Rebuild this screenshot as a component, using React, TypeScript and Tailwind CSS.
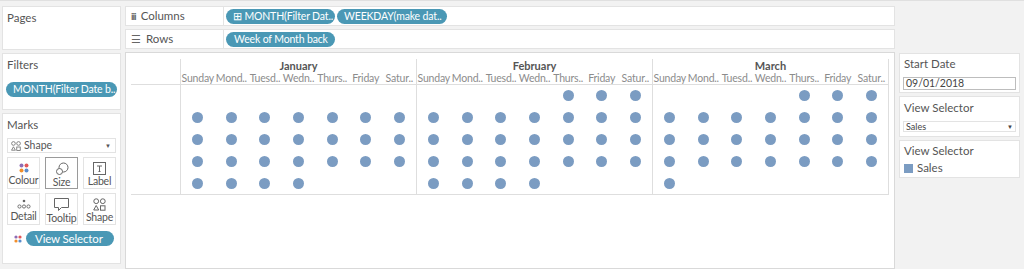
import React from "react";

const F = { fontFamily: "Lato, 'Noto Sans', 'Liberation Sans', sans-serif" };

const full = [1, 1, 1, 1, 1, 1, 1];
const months = [
  { name: "January", rows: [[0, 0, 0, 0, 0, 0, 0], full, full, full, [1, 1, 1, 1, 0, 0, 0]] },
  { name: "February", rows: [[0, 0, 0, 0, 1, 1, 1], full, full, full, [1, 1, 1, 1, 0, 0, 0]] },
  { name: "March", rows: [[0, 0, 0, 0, 1, 1, 1], full, full, full, [1, 0, 0, 0, 0, 0, 0]] },
];
const days = ["Sunday", "Mond..", "Tuesd..", "Wedn..", "Thurs..", "Friday", "Satur.."];

function Pill({ children, className = "" }: { children: React.ReactNode; className?: string }) {
  return (
    <div
      className={`h-[15px] rounded-full bg-[#4a98b5] text-white text-[10.5px] leading-[15px] px-[7px] whitespace-nowrap overflow-hidden tracking-[-0.15px] ${className}`}
    >
      {children}
    </div>
  );
}

function Card({ title, className = "", children }: { title: string; className?: string; children?: React.ReactNode }) {
  return (
    <div className={`bg-white border border-[#e3e3e3] ${className}`}>
      <div className="text-[11.5px] text-[#555] px-[4px] pt-[4px] leading-[14px]">{title}</div>
      {children}
    </div>
  );
}

function ColourIcon() {
  return (
    <svg width="10" height="10" viewBox="0 0 10 10">
      <circle cx="2.5" cy="2.5" r="2" fill="#8f6db5" />
      <circle cx="7.5" cy="2.5" r="2" fill="#e15759" />
      <circle cx="2.5" cy="7.5" r="2" fill="#f28e2b" />
      <circle cx="7.5" cy="7.5" r="2" fill="#5b8ccc" />
    </svg>
  );
}

function SizeIcon() {
  return (
    <svg width="14" height="14" viewBox="0 0 14 14" fill="none" stroke="#666" strokeWidth="1">
      <circle cx="8.5" cy="5.5" r="4.5" />
      <circle cx="4.5" cy="9.5" r="3" fill="white" />
    </svg>
  );
}

function LabelIcon() {
  return (
    <svg width="13" height="13" viewBox="0 0 13 13" fill="none" stroke="#666" strokeWidth="1">
      <rect x="0.5" y="0.5" width="12" height="12" />
      <path d="M4 4h5M6.5 4v5.5M5.5 9.5h2" />
    </svg>
  );
}

function DetailIcon() {
  return (
    <svg width="14" height="10" viewBox="0 0 14 10" fill="none" stroke="#666" strokeWidth="0.9">
      <circle cx="7" cy="2" r="1.3" fill="#666" stroke="none" />
      <circle cx="2.5" cy="7.5" r="1.6" />
      <circle cx="7" cy="7.5" r="1.6" />
      <circle cx="11.5" cy="7.5" r="1.6" />
    </svg>
  );
}

function TooltipIcon() {
  return (
    <svg width="15" height="14" viewBox="0 0 15 14" fill="none" stroke="#666" strokeWidth="1">
      <path d="M0.5 0.5h14v9h-7l-3 3v-3h-4z" />
    </svg>
  );
}

function ShapeIcon({ size = 13 }: { size?: number }) {
  return (
    <svg width={size} height={size} viewBox="0 0 13 13" fill="none" stroke="#666" strokeWidth="1">
      <circle cx="3.2" cy="3.2" r="2.4" />
      <circle cx="9.8" cy="3.2" r="2.4" />
      <path d="M3.2 7.5l2.5 4.5h-5z" />
      <rect x="7.5" y="7.8" width="4.5" height="4.4" />
    </svg>
  );
}

function MarkBtn({ label, icon, selected = false }: { label: string; icon: React.ReactNode; selected?: boolean }) {
  return (
    <div
      className={`h-[32px] flex flex-col items-center justify-between pt-[4px] pb-[2px] bg-white border ${
        selected ? "border-[#9a9a9a]" : "border-[#e3e3e3]"
      }`}
    >
      <div className="h-[14px] flex items-center">{icon}</div>
      <div className="text-[10.5px] text-[#555] leading-[12px] tracking-[-0.2px] whitespace-nowrap">{label}</div>
    </div>
  );
}

export default function App() {
  return (
    <div style={F} className="w-[1024px] h-[269px] bg-[#f2f2f2] flex overflow-hidden border-t border-[#e0e0e0]">
      {/* Left column */}
      <div className="w-[119px] ml-[2px] pt-[5px] flex flex-col gap-[3px] shrink-0">
        <Card title="Pages" className="h-[44px]" />
        <Card title="Filters" className="h-[57px]">
          <div className="px-[3px] pt-[10px]">
            <Pill className="px-[6px]">MONTH(Filter Date b..</Pill>
          </div>
        </Card>
        <Card title="Marks" className="h-[151px]">
          <div className="px-[4px] pt-[6px]">
            <div className="h-[15px] border border-[#e3e3e3] flex items-center justify-between px-[3px] text-[10.5px] text-[#555]">
              <div className="flex items-center gap-[3px]">
                <ShapeIcon size={10} />
                <span className="leading-[13px]">Shape</span>
              </div>
              <span className="text-[6px] text-[#555] pr-[1px]">▼</span>
            </div>
            <div className="grid grid-cols-3 gap-x-[5px] gap-y-[4px] mt-[4px]">
              <MarkBtn label="Colour" icon={<ColourIcon />} />
              <MarkBtn label="Size" icon={<SizeIcon />} selected />
              <MarkBtn label="Label" icon={<LabelIcon />} />
              <MarkBtn label="Detail" icon={<DetailIcon />} />
              <MarkBtn label="Tooltip" icon={<TooltipIcon />} />
              <MarkBtn label="Shape" icon={<ShapeIcon />} />
            </div>
            <div className="flex items-center mt-[6px] gap-[4px] pl-[7px]">
              <svg width="8" height="8" viewBox="0 0 8 8">
                <circle cx="2" cy="2" r="1.6" fill="#8f6db5" />
                <circle cx="6" cy="2" r="1.6" fill="#e15759" />
                <circle cx="2" cy="6" r="1.6" fill="#f28e2b" />
                <circle cx="6" cy="6" r="1.6" fill="#5b8ccc" />
              </svg>
              <Pill className="w-[88px] px-[9px] text-[11.5px]">View Selector</Pill>
            </div>
          </div>
        </Card>
      </div>

      {/* Middle column */}
      <div className="w-[770px] ml-[4px] pt-[5px] flex flex-col gap-[3px] shrink-0">
        <div className="h-[20px] flex">
          <div className="w-[99px] bg-white border border-[#e3e3e3] flex items-center gap-[5px] px-[5px] text-[11.5px] text-[#555]">
            <span className="text-[10px] font-bold text-[#666] tracking-[-1px]">iii</span>
            <span>Columns</span>
          </div>
          <div className="flex-1 bg-white border border-l-0 border-[#e3e3e3] flex items-center gap-[2px] pl-[2px]">
            <Pill className="w-[109px] px-[6px]">⊞ MONTH(Filter Dat..</Pill>
            <Pill className="w-[110px] px-[7px]">WEEKDAY(make dat..</Pill>
          </div>
        </div>
        <div className="h-[20px] flex">
          <div className="w-[99px] bg-white border border-[#e3e3e3] flex items-center gap-[5px] px-[5px] text-[11.5px] text-[#555]">
            <span className="text-[11px] text-[#666]">☰</span>
            <span>Rows</span>
          </div>
          <div className="flex-1 bg-white border border-l-0 border-[#e3e3e3] flex items-center pl-[2px]">
            <Pill className="w-[109px] px-[8px]">Week of Month back</Pill>
          </div>
        </div>
        {/* View */}
        <div className="flex-1 bg-white border border-[#d9d9d9] pl-[5px] pt-[6px]">
          <div className="w-[758px] flex flex-col">
            <div className="h-[26px] flex border-b border-[#dedede]">
              <div className="w-[49px]" />
              {months.map((m, i) => (
                <div
                  key={m.name}
                  className={`flex-1 border-l border-[#dedede] flex flex-col ${i === 2 ? "border-r" : ""}`}
                >
                  <div className="h-[13px] text-center text-[11px] font-bold text-[#555] leading-[13px]">{m.name}</div>
                  <div className="flex h-[13px]">
                    {days.map((d) => (
                      <div key={d} className="flex-1 text-center text-[10.5px] text-[#8c8c8c] leading-[13px] whitespace-nowrap tracking-[-0.2px]">
                        {d}
                      </div>
                    ))}
                  </div>
                </div>
              ))}
            </div>
            <div className="h-[110px] flex border-b border-[#dedede]">
              <div className="w-[49px]" />
              {months.map((m, i) => (
                <div key={m.name} className={`flex-1 border-l border-[#dedede] flex flex-col ${i === 2 ? "border-r" : ""}`}>
                  {m.rows.map((r, ri) => (
                    <div key={ri} className="flex-1 flex">
                      {r.map((v, ci) => (
                        <div key={ci} className="flex-1 flex items-center justify-center">
                          {v ? <div className="w-[11px] h-[11px] rounded-full bg-[#7b9cc2]" /> : null}
                        </div>
                      ))}
                    </div>
                  ))}
                </div>
              ))}
            </div>
          </div>
        </div>
      </div>

      {/* Right column */}
      <div className="w-[121px] ml-[4px] pt-[52px] flex flex-col gap-[3px] shrink-0">
        <div className="h-[40px] bg-white border border-[#e3e3e3]">
          <div className="text-[11.5px] text-[#555] px-[4px] pt-[3px] leading-[14px]">Start Date</div>
          <div className="mx-[3px] mt-[6px] h-[13px] border border-[#bdbdbd] text-[10.5px] text-[#444] leading-[11px] px-[2px]">
            09/01/2018
          </div>
        </div>
        <div className="h-[41px] bg-white border border-[#e3e3e3]">
          <div className="text-[11.5px] text-[#555] px-[4px] pt-[4px] leading-[14px]">View Selector</div>
          <div className="mx-[3px] mt-[6px] h-[11px] border border-[#e3e3e3] flex items-center justify-between text-[9px] text-[#444] px-[2px]">
            <span className="leading-[9px]">Sales</span>
            <span className="text-[6px]">▼</span>
          </div>
        </div>
        <div className="h-[38px] bg-white border border-[#e3e3e3]">
          <div className="text-[11.5px] text-[#555] px-[4px] pt-[3px] leading-[14px]">View Selector</div>
          <div className="flex items-center gap-[4px] px-[4px] mt-[3px]">
            <div className="w-[9px] h-[9px] bg-[#7b9cc2]" />
            <span className="text-[11.5px] text-[#555] leading-[14px]">Sales</span>
          </div>
        </div>
      </div>
    </div>
  );
}
